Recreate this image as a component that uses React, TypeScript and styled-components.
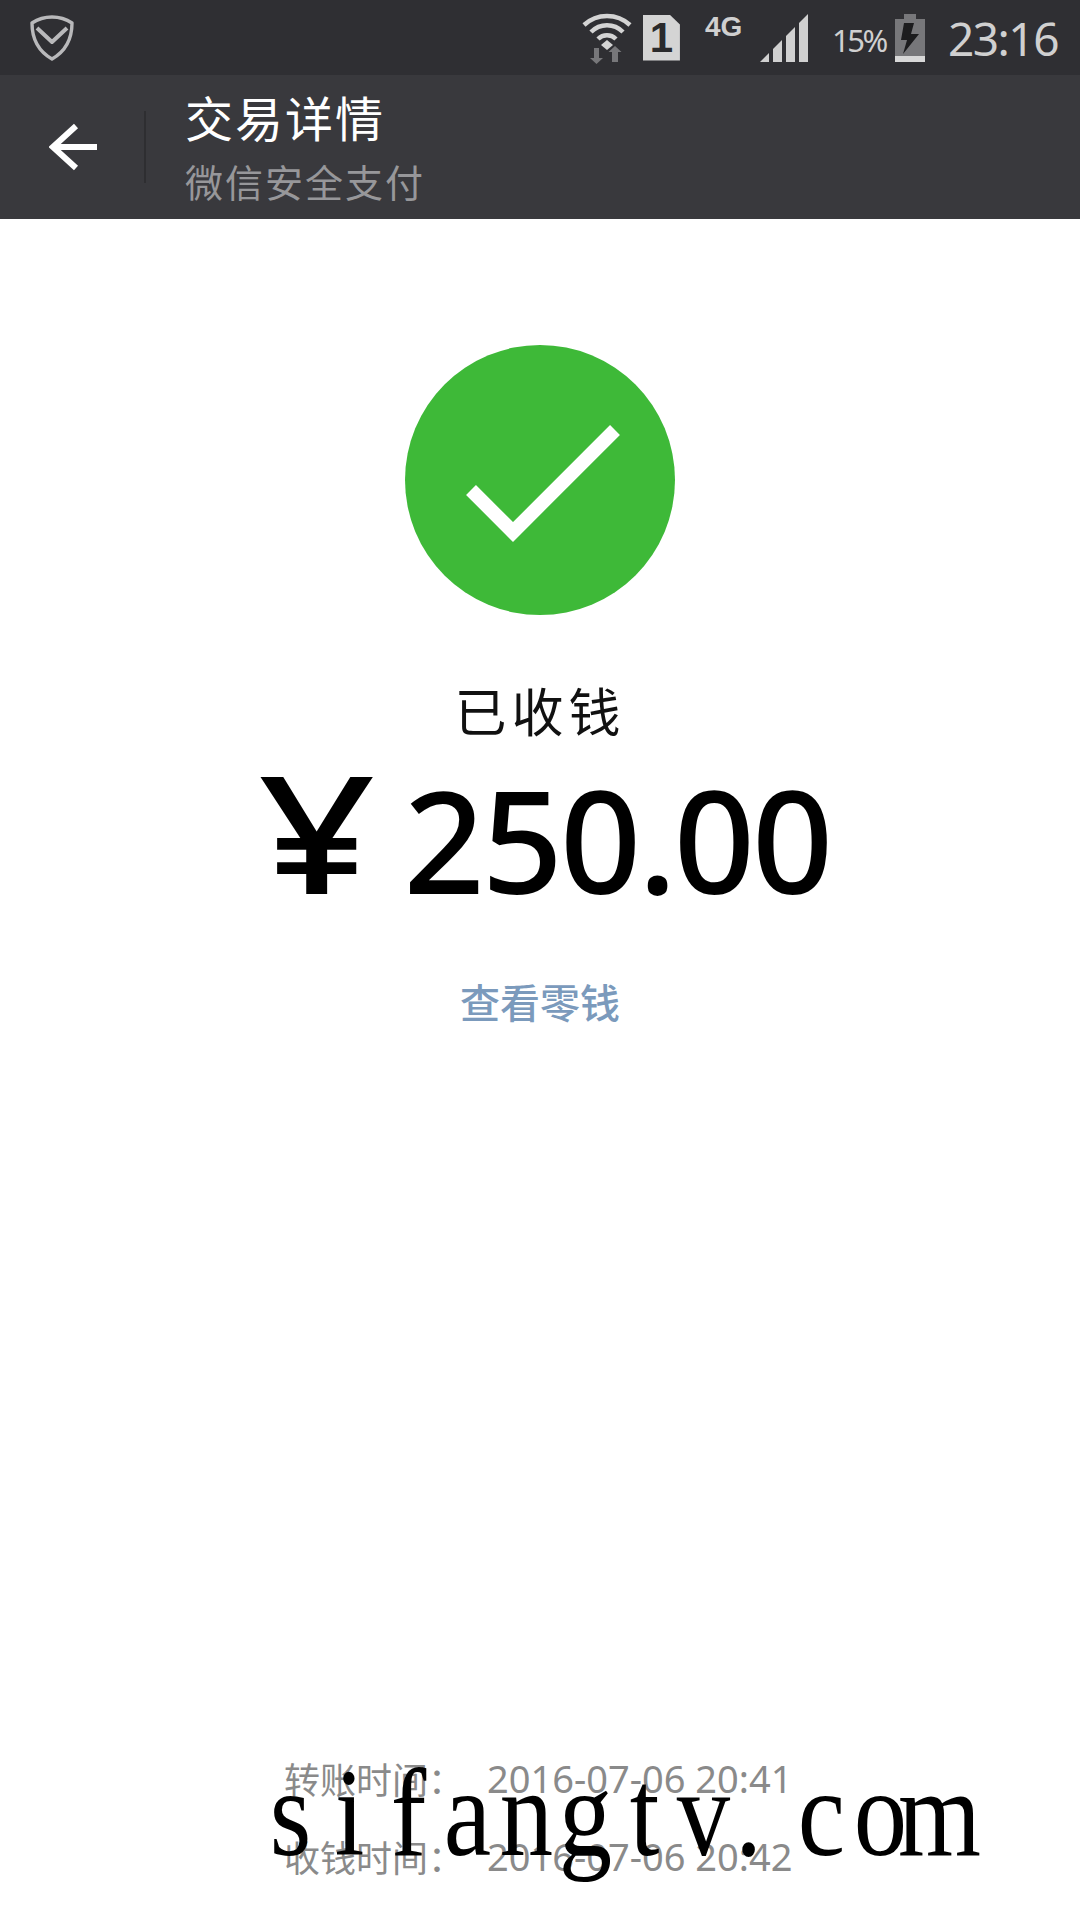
import styled, { createGlobalStyle } from 'styled-components';

const GlobalStyle = createGlobalStyle`
  html, body {
    margin: 0;
    padding: 0;
    background: #fff;
  }
  body {
    font-family: "Noto Sans CJK SC", "Noto Sans", sans-serif;
  }
`;

// the dot and the space share one letter cell in the watermark
const WATERMARK = [
  ['s', 59], ['i', 59], ['f', 59], ['a', 59], ['n', 59], ['g', 59], ['t', 59], ['v', 59],
  ['.', 31], ['\u00a0', 28], ['c', 59], ['o', 59], ['m', 59],
] as const;

function App() {
  return (
    <Page>
      <GlobalStyle />
      <StatusBar>
        <svg width="44" height="46" viewBox="0 0 44 46" fill="none" stroke="#b9b9bb" strokeWidth="3.4" strokeLinejoin="round">
          <path d="M22 2 C29 2 36 4 42 8 C42 24 36 36 22 44 C8 36 2 24 2 8 C8 4 15 2 22 2 Z" />
          <path d="M7 13 L22 27 L37 13" strokeWidth="4" />
        </svg>
        <StatusRight>
          <svg width="50" height="52" viewBox="0 0 50 52" fill="none">
            <path d="M2 13 C15 1 35 1 48 13" stroke="#d4d4d4" strokeWidth="4.5" />
            <path d="M9 20 C18 11 32 11 41 20" stroke="#d4d4d4" strokeWidth="4.5" />
            <path d="M16 27 C21 22 29 22 34 27" stroke="#d4d4d4" strokeWidth="4.5" />
            <path d="M25 28 L31 33 L25 38 L19 33 Z" fill="#d4d4d4" />
            <path d="M17 36 V46 H21 L14.500 52 L8 46 H12 V36 Z" fill="#77777a" />
            <path d="M33 34 L39.500 40 H36 V50 H30 V40 H26.500 Z" fill="#77777a" />
          </svg>
          <SimCard>1</SimCard>
          <NetworkType>4G</NetworkType>
          <svg width="48" height="48" viewBox="0 0 48 48" fill="#d0d0d0">
            <path d="M0 48 L9 39 V48 Z" />
            <path d="M13 48 V35 L22 26 V48 Z" />
            <path d="M26 48 V22 L35 13 V48 Z" />
            <path d="M39 48 V9 L48 0 V48 Z" />
          </svg>
          <BatteryLevel>15%</BatteryLevel>
          <svg width="30" height="48" viewBox="0 0 30 48">
            <rect x="9" y="0" width="12" height="6" fill="#77777a" />
            <rect x="0" y="5" width="30" height="37" fill="#77777a" />
            <rect x="0" y="42" width="30" height="6" fill="#d8d8d8" />
            <path d="M19 9 H9 L6 26 H12 L8 40 L24 20 H16 Z" fill="#1c1c1e" />
          </svg>
          <Clock>23:16</Clock>
        </StatusRight>
      </StatusBar>

      <AppBar>
        <BackButton>
          <svg width="48" height="48" viewBox="0 0 48 48" fill="none" stroke="#fff" strokeWidth="6">
            <path d="M48 24 H4" />
            <path d="M27 3 L4 24 L27 45" />
          </svg>
        </BackButton>
        <Divider />
        <Titles>
          <Title>交易详情</Title>
          <Subtitle>微信安全支付</Subtitle>
        </Titles>
      </AppBar>

      <Main>
        <SuccessBadge>
          <svg width="270" height="270" viewBox="0 0 270 270">
            <circle cx="135" cy="135" r="135" fill="#3eb938" />
            <path d="M66 145 L108 187 L210 85" fill="none" stroke="#fff" strokeWidth="14" />
          </svg>
        </SuccessBadge>
        <Status>已收钱</Status>
        <Amount>
          <Currency>¥</Currency>
          <Value>250.00</Value>
        </Amount>
        <ChangeLink>查看零钱</ChangeLink>

        <Footer>
          <FooterRow>转账时间：<FooterDate>2016-07-06 20:41</FooterDate></FooterRow>
          <FooterRow>收钱时间：<FooterDate>2016-07-06 20:42</FooterDate></FooterRow>
          <Watermark>
            {WATERMARK.map(([ch, width], i) => (
              <WatermarkChar key={i} $width={width}>{ch}</WatermarkChar>
            ))}
          </Watermark>
        </Footer>
      </Main>
    </Page>
  );
}

export default App;

const Page = styled.div`
  width: 1080px;
  height: 1920px;
  display: flex;
  flex-direction: column;
  overflow: hidden;
  background: #fff;
`;

const StatusBar = styled.div`
  height: 75px;
  flex: none;
  box-sizing: border-box;
  padding: 0 22px 0 30px;
  display: flex;
  align-items: center;
  justify-content: space-between;
  background: #2f2f33;
  color: #d0d0d0;
`;

const StatusRight = styled.div`
  display: flex;
  align-items: center;
`;

const SimCard = styled.div`
  width: 37px;
  height: 46px;
  margin-left: 11px;
  display: flex;
  align-items: center;
  justify-content: center;
  background: #d4d4d4;
  clip-path: polygon(0 0, 72% 0, 100% 22%, 100% 100%, 0 100%);
  color: #2a2a2c;
  font-family: "Liberation Sans", sans-serif;
  font-size: 42px;
  font-weight: 700;
`;

const NetworkType = styled.div`
  width: 40px;
  height: 48px;
  margin: 0 15px 0 25px;
  font-family: "Liberation Sans", sans-serif;
  font-size: 28px;
  font-weight: 700;
  line-height: 26px;
  color: #d0d0d0;
`;

const BatteryLevel = styled.div`
  width: 54px;
  margin: 4px 9px 0 24px;
  font-family: "Noto Sans", sans-serif;
  font-size: 31px;
  letter-spacing: -2.500px;
  white-space: nowrap;
`;

const Clock = styled.div`
  margin-left: 23px;
  font-family: "Noto Sans", sans-serif;
  font-size: 46px;
  font-weight: 400;
  line-height: 48px;
  letter-spacing: -1.500px;
`;

const AppBar = styled.div`
  height: 144px;
  flex: none;
  display: flex;
  align-items: center;
  background: #39393d;
`;

const BackButton = styled.div`
  width: 144px;
  height: 48px;
  box-sizing: border-box;
  padding-left: 49px;
`;

const Divider = styled.div`
  width: 2px;
  height: 72px;
  background: #2e2e31;
`;

const Titles = styled.div`
  margin: -4px 0 0 39px;
  display: flex;
  flex-direction: column;
`;

const Title = styled.div`
  margin-bottom: 6px;
  font-size: 48px;
  line-height: 66px;
  letter-spacing: 2px;
  color: #fff;
`;

const Subtitle = styled.div`
  font-size: 38px;
  line-height: 52px;
  letter-spacing: 2px;
  color: #97979a;
`;

const Main = styled.div`
  flex: 1;
  display: flex;
  flex-direction: column;
  align-items: center;
`;

const SuccessBadge = styled.div`
  margin-top: 126px;
  height: 270px;
`;

const Status = styled.div`
  margin-top: 60px;
  font-size: 52px;
  line-height: 70px;
  letter-spacing: 5px;
  color: #111;
`;

const Amount = styled.div`
  height: 150px;
  margin: 11px 0 0 20px;
  display: flex;
  align-items: baseline;
  gap: 40px;
  color: #000;
  font-family: "Noto Sans", sans-serif;
  font-weight: 500;
  line-height: 150px;
`;

const Currency = styled.span`
  display: inline-block;
  font-size: 164px;
  transform: scaleX(1.25);
`;

const Value = styled.span`
  font-size: 142px;
  letter-spacing: -3px;
`;

const ChangeLink = styled.div`
  margin-top: 68px;
  font-size: 40px;
  font-weight: 500;
  line-height: 54px;
  color: #7b9abc;
`;

const Footer = styled.div`
  position: relative;
  margin-top: auto;
  margin-bottom: 42px;
  width: 512px;
  display: flex;
  flex-direction: column;
  gap: 34.500px;
  color: #8a8a8a;
  font-size: 36px;
  line-height: 44px;
  white-space: nowrap;
`;

const FooterRow = styled.div`
  display: flex;
`;

const FooterDate = styled.span`
  margin-left: 23px;
  font-family: "Noto Sans", sans-serif;
  font-size: 38px;
`;

const Watermark = styled.div`
  position: absolute;
  left: -23.500px;
  top: -4px;
  display: flex;
  color: #000;
  font-family: "Liberation Serif", serif;
  font-size: 124px;
  line-height: 124px;
`;

const WatermarkChar = styled.span<{ $width: number }>`
  width: ${(p) => p.$width}px;
  display: inline-flex;
  justify-content: center;
  transform: scaleX(0.86);
`;
